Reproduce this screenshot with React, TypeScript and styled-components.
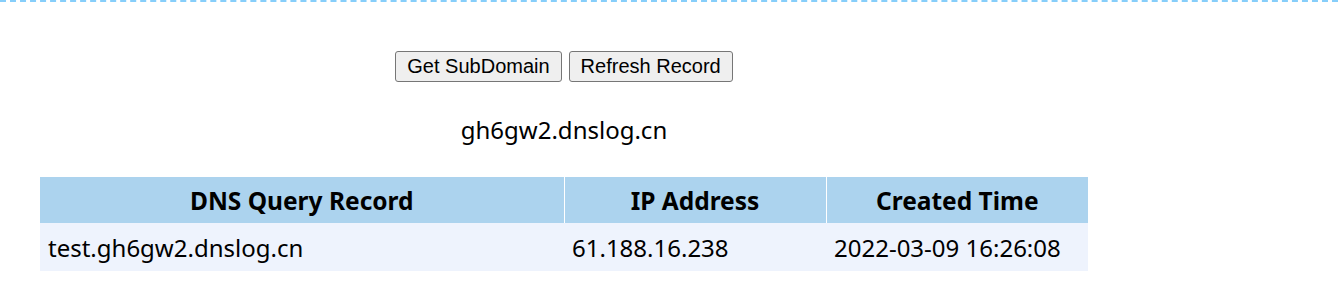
import React from 'react';
import styled, { createGlobalStyle } from 'styled-components';

const GlobalStyle = createGlobalStyle`
  body {
    margin: 0;
    background: #fff;
    font-family: "Noto Sans", "Noto Sans CJK SC", sans-serif;
  }
`;

const Page = styled.div`
  border-top: 2px dashed #87cefa;
  height: 292px;
`;

const Content = styled.div`
  width: 1048px;
  margin-left: 40px;
  display: flex;
  flex-direction: column;
  align-items: center;
`;

const Toolbar = styled.div`
  display: flex;
  gap: 7px;
  margin-top: 49px;
`;

const Button = styled.button`
  height: 31px;
  padding: 0 11px;
  font-family: "Liberation Sans", Arial, sans-serif;
  font-size: 20px;
  color: #000;
  background: #efefef;
  border: 1px solid #767676;
  border-radius: 3px;
`;

const Domain = styled.div`
  margin-top: 32px;
  font-size: 24px;
  line-height: 32px;
  color: #000;
`;

const Table = styled.table`
  width: 100%;
  margin-top: 31px;
  border-collapse: collapse;
  font-size: 24px;
`;

const Th = styled.th<{ $w: string }>`
  width: ${(p) => p.$w};
  height: 46px;
  padding: 0;
  background: #acd3ee;
  font-size: 24.5px;
  font-weight: bold;
  text-align: center;
  & + & {
    border-left: 1px solid #fff;
  }
`;

const Td = styled.td`
  height: 48px;
  padding: 0 8px;
  background: #eef3fd;
  text-align: left;
`;

const records = [
  { name: 'test.gh6gw2.dnslog.cn', ip: '61.188.16.238', time: '2022-03-09 16:26:08' },
];

export default function App() {
  return (
    <Page>
      <GlobalStyle />
      <Content>
        <Toolbar>
          <Button>Get SubDomain</Button>
          <Button>Refresh Record</Button>
        </Toolbar>
        <Domain>gh6gw2.dnslog.cn</Domain>
        <Table>
          <thead>
            <tr>
              <Th $w="50%">DNS Query Record</Th>
              <Th $w="25%">IP Address</Th>
              <Th $w="25%">Created Time</Th>
            </tr>
          </thead>
          <tbody>
            {records.map((r) => (
              <tr key={r.name}>
                <Td>{r.name}</Td>
                <Td>{r.ip}</Td>
                <Td>{r.time}</Td>
              </tr>
            ))}
          </tbody>
        </Table>
      </Content>
    </Page>
  );
}
